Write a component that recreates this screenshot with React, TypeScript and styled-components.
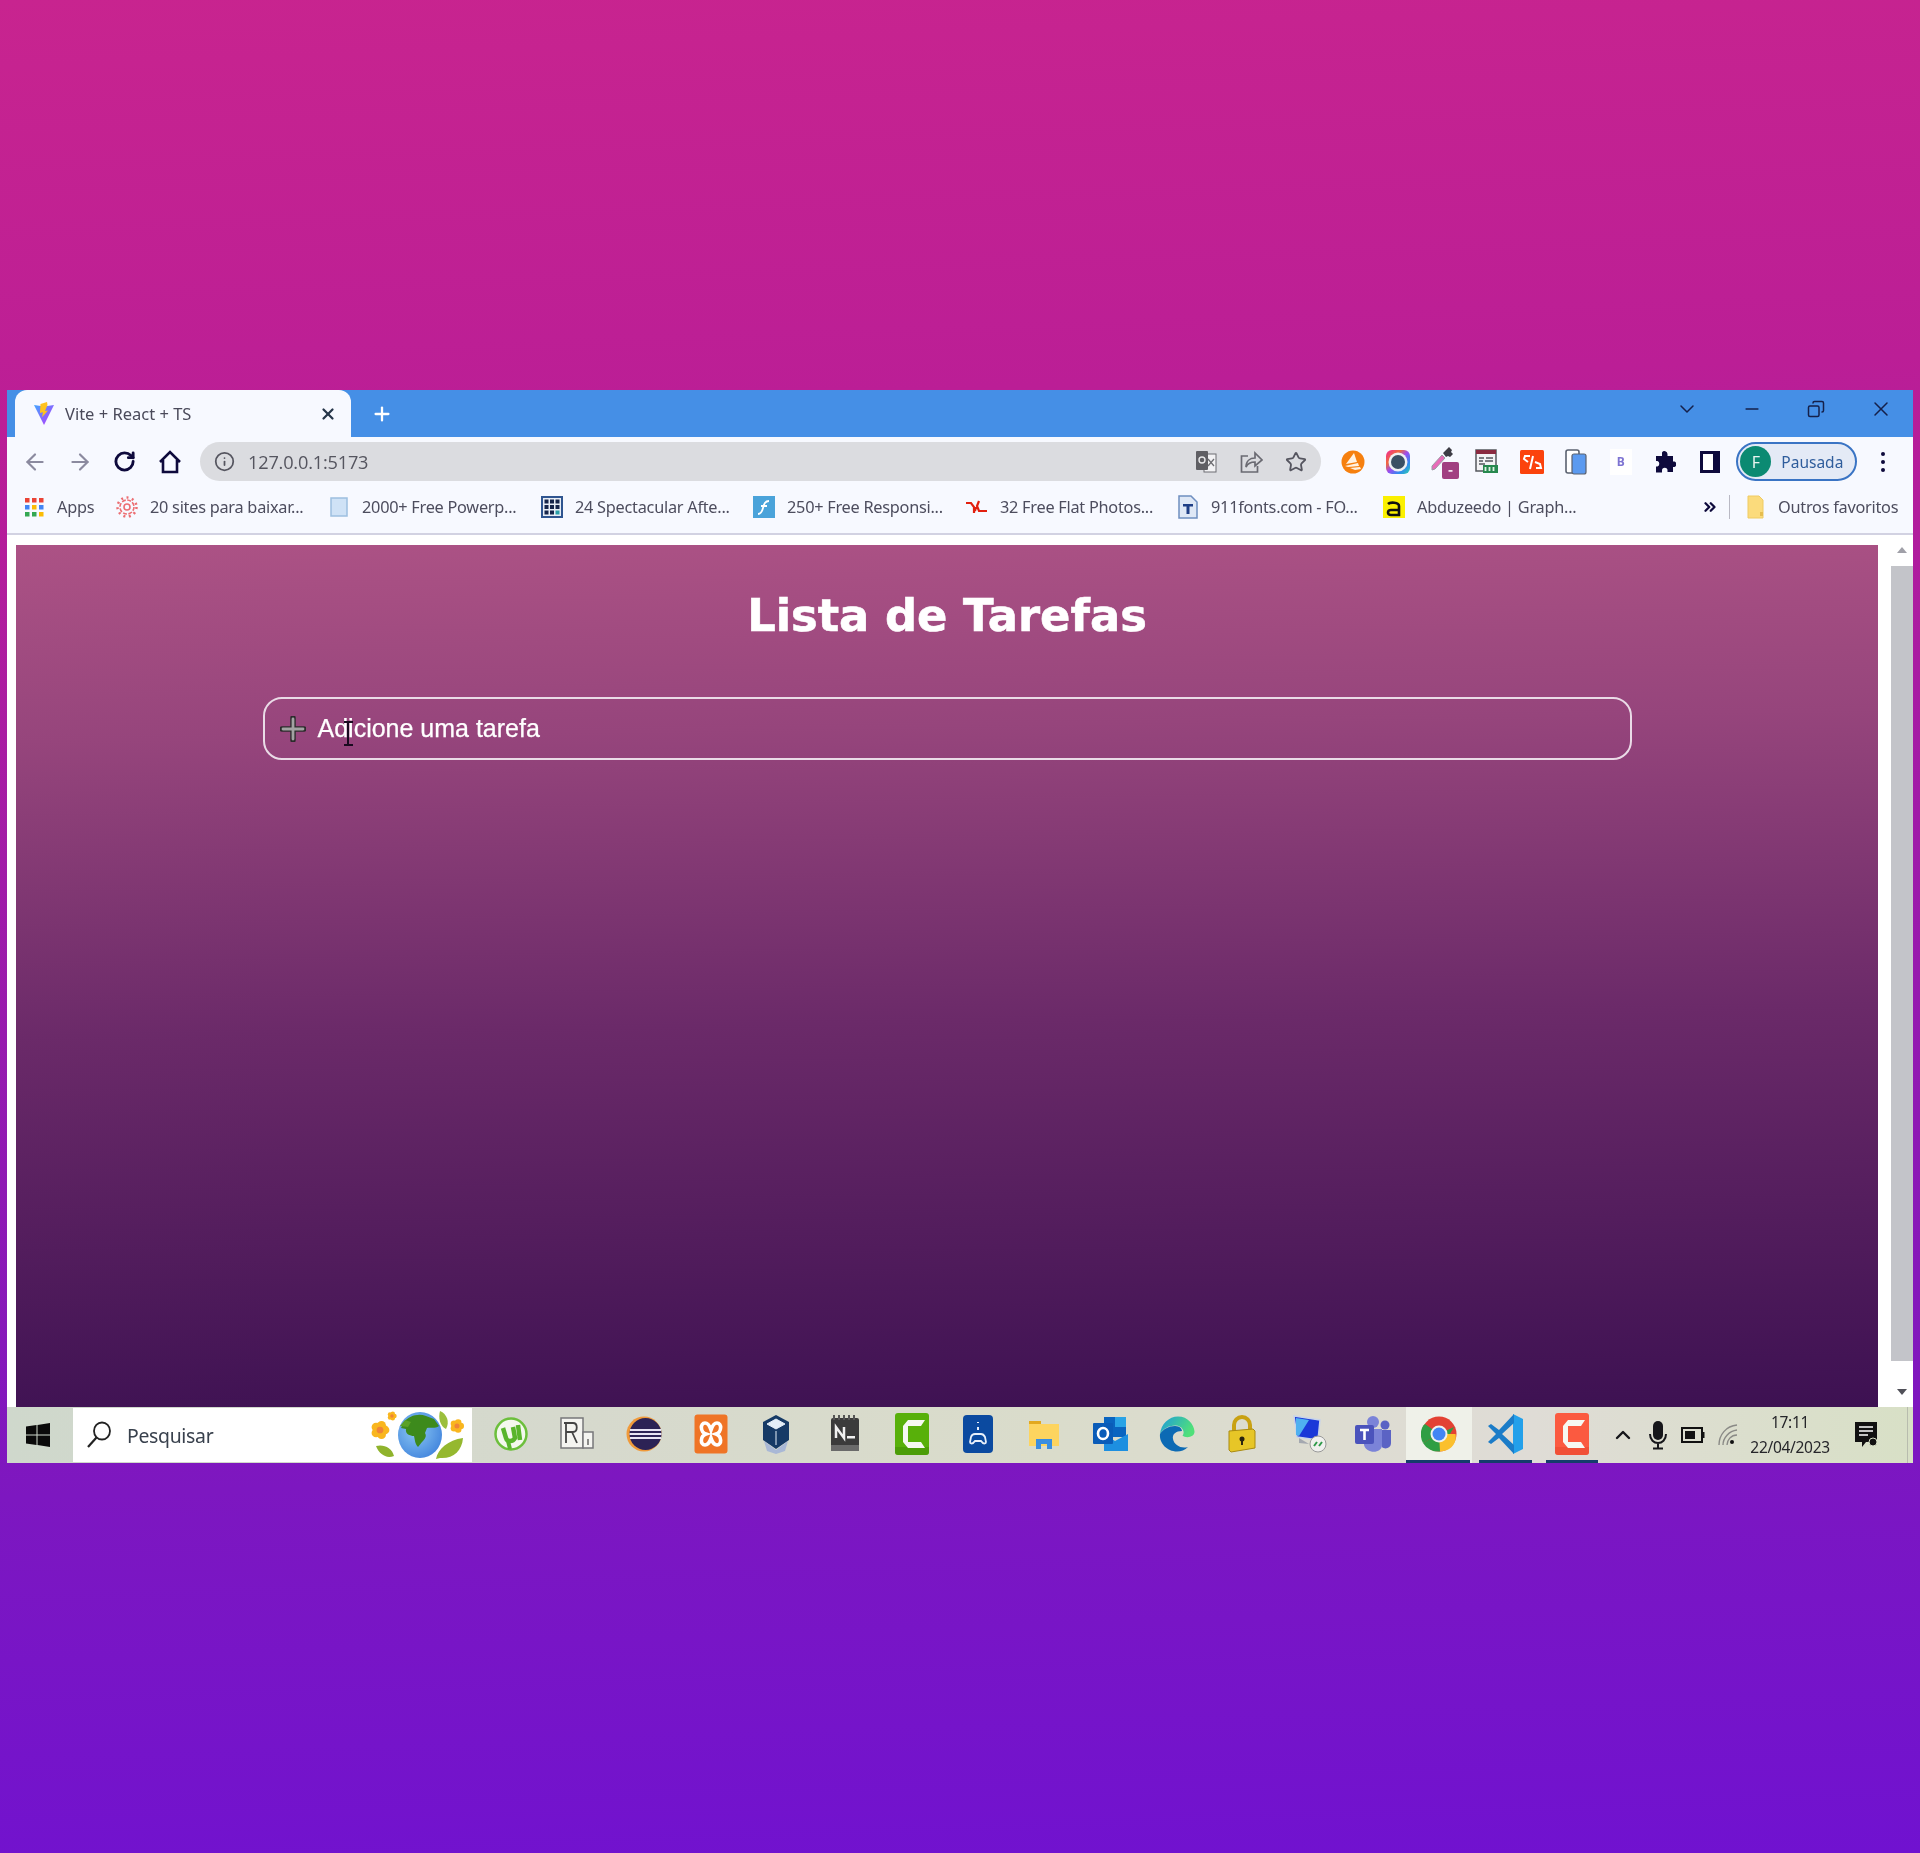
import React from 'react';
import styled, { createGlobalStyle } from 'styled-components';
import {
  ArrowLeft, ArrowRight, RotateCw, Info, Star, ChevronDown, Minus, Copy, X, Plus,
  ChevronsRight, ChevronUp,
} from 'lucide-react';

const UI_FONT = '"Noto Sans", "Open Sans", sans-serif';

const GlobalStyle = createGlobalStyle`
  html, body { margin: 0; padding: 0; }
  body { background: #7112d0; }
`;

const Page = styled.div`
  height: 1853px;
  padding: 390px 0 0 7px;
  box-sizing: border-box;
  background: linear-gradient(178deg, #c8248f 0%, #bb1e96 22%, #7d17c0 78%, #7012d0 100%);
`;

const Window = styled.div`
  width: 1906px;
  height: 1073px;
  display: flex;
  flex-direction: column;
  background: #f7f9ff;
  font-family: ${UI_FONT};
  filter: blur(0.4px);
`;

const TabStrip = styled.div`
  height: 47px;
  flex: none;
  display: flex;
  align-items: stretch;
  background: #458fe6;
  padding-left: 8px;
`;

const Tab = styled.div`
  width: 336px;
  display: flex;
  align-items: center;
  padding: 0 14px 0 18px;
  box-sizing: border-box;
  background: #f7f9ff;
  border-radius: 12px 12px 0 0;
  color: #4a4a5a;
  font-size: 16.5px;
`;

const TabTitle = styled.span`
  margin-left: 10px;
  margin-top: -1px;
  flex: 1;
  white-space: nowrap;
`;

const NewTab = styled.div`
  width: 62px;
  display: flex;
  align-items: center;
  justify-content: center;
  color: #fff;
`;

const WindowControls = styled.div`
  margin-left: auto;
  display: flex;
  align-items: flex-start;
  padding: 7px 0 0 0;
  color: #15204a;
`;

const WindowButton = styled.div`
  width: 64.5px;
  height: 24px;
  display: flex;
  align-items: center;
  justify-content: center;
`;

const Toolbar = styled.div`
  height: 49px;
  flex: none;
  display: flex;
  align-items: center;
  padding-left: 5px;
`;

const ToolButton = styled.div<{ $muted?: boolean }>`
  width: 45px;
  height: 39px;
  flex: none;
  display: flex;
  align-items: center;
  justify-content: center;
  color: ${(p) => (p.$muted ? '#8b8a9f' : '#0e0a3c')};
`;

const AddressBar = styled.div`
  width: 1121px;
  height: 39px;
  flex: none;
  margin: 0 10px 0 8px;
  padding: 0 3px 0 14px;
  box-sizing: border-box;
  display: flex;
  align-items: center;
  background: #dbdce0;
  border-radius: 20px;
  color: #55555f;
  font-size: 18.2px;
`;

const AddressText = styled.span`
  flex: 1;
  margin-left: 13px;
  letter-spacing: -0.2px;
  font-family: "Open Sans", sans-serif;
`;

const ExtButton = styled.div`
  width: 44.6px;
  height: 39px;
  flex: none;
  display: flex;
  align-items: center;
  justify-content: center;
`;

const ProfilePill = styled.div`
  width: 121px;
  height: 39px;
  flex: none;
  margin-left: 4px;
  box-sizing: border-box;
  display: flex;
  align-items: center;
  padding-left: 2px;
  border: 2px solid #3a74c4;
  border-radius: 20px;
  background: #e4eaf6;
  color: #2f5d9c;
  font-size: 15.5px;
`;

const Avatar = styled.div`
  width: 31px;
  height: 31px;
  margin-right: 10px;
  border-radius: 50%;
  background: #0b8a72;
  color: #e8f5f0;
  font-size: 16px;
  display: flex;
  align-items: center;
  justify-content: center;
`;

const MenuDots = styled.div`
  width: 4px;
  margin-left: 24px;
  display: flex;
  flex-direction: column;
  gap: 4px;
  span { width: 4px; height: 4px; border-radius: 50%; background: #0e0a3c; }
`;

const Bookmarks = styled.div`
  height: 47px;
  flex: none;
  display: flex;
  align-items: center;
  padding: 0 0 6px 16px;
  box-sizing: border-box;
  color: #4d4d5e;
  font-size: 16.3px;
  letter-spacing: -0.25px;
`;

const Bookmark = styled.div<{ $width: number }>`
  width: ${(p) => p.$width}px;
  flex: none;
  display: flex;
  align-items: center;
  gap: 12px;
  white-space: nowrap;
`;

const FavSlot = styled.div`
  width: 22px;
  height: 24px;
  flex: none;
  display: flex;
  align-items: center;
  justify-content: center;
`;

const OverflowMark = styled.div`
  width: 18px;
  height: 18px;
  margin-left: 2px;
  flex: none;
  display: flex;
`;

const BookmarkDivider = styled.div`
  width: 1px;
  height: 24px;
  margin: 0 14px 0 10px;
  flex: none;
  background: #b9b9c4;
`;

const Viewport = styled.div`
  flex: 1;
  min-height: 0;
  display: flex;
  background: #fff;
  border-top: 2px solid #d2d2e2;
`;

const Content = styled.main`
  width: 1862px;
  margin: 10px 0 0 9px;
  display: flex;
  flex-direction: column;
  align-items: center;
  background: linear-gradient(179deg, #ac5285 0%, #96457c 22%, #6b2a69 55%, #3d1152 100%);
`;

const Heading = styled.h1`
  margin: 43px 0 0;
  font-family: "DejaVu Sans", Verdana, sans-serif;
  font-size: 44.8px;
  line-height: 56px;
  font-weight: 700;
  color: #fff;
  -webkit-text-stroke: 0.6px #fff;
`;

const TaskInput = styled.div`
  position: relative;
  width: 1369px;
  height: 63px;
  margin-top: 53px;
  box-sizing: border-box;
  display: flex;
  align-items: center;
  padding: 0 0 1px 15px;
  border: 2px solid #eadbe7;
  border-radius: 19px;
  color: #fff;
  font-family: "Liberation Sans", Arial, sans-serif;
  font-size: 25px;
  -webkit-text-stroke: 0.25px #fff;
`;

const PlusMark = styled.div`
  width: 26px;
  height: 26px;
  margin: 2px 12px 0 0;
  flex: none;
`;

const TextCursor = styled.div`
  position: absolute;
  left: 79px;
  top: 22px;
  width: 9px;
  height: 25px;
  border-top: 2px solid #1a0a20;
  border-bottom: 2px solid #1a0a20;
  box-sizing: border-box;
  &::before {
    content: '';
    display: block;
    width: 2px;
    height: 21px;
    margin-left: 3.5px;
    background: #1a0a20;
  }
`;

const Scrollbar = styled.div`
  flex: 1;
  display: flex;
  flex-direction: column;
  justify-content: space-between;
  align-items: flex-end;
  padding: 8px 0 8px 0;
  background: #fff;
`;

const ScrollTrack = styled.div`
  width: 22px;
  margin: 9px 0 24px;
  flex: 1;
  background: #c3c4c9;
`;

const ScrollArrow = styled.div<{ $down?: boolean }>`
  width: 22px;
  height: 14px;
  display: flex;
  align-items: center;
  justify-content: center;
  &::before {
    content: '';
    border-left: 5px solid transparent;
    border-right: 5px solid transparent;
    ${(p) => (p.$down ? 'border-top: 6px solid #505058;' : 'border-bottom: 6px solid #a0a0a8;')}
  }
`;

const Taskbar = styled.div`
  height: 56px;
  flex: none;
  display: flex;
  align-items: stretch;
  background: linear-gradient(90deg, #cfd8cc 0%, #d6d9cd 30%, #dadccb 55%, #dfdcd6 80%, #d8e0c6 100%);
`;

const StartButton = styled.div`
  width: 66px;
  flex: none;
  padding-right: 4px;
  box-sizing: border-box;
  display: flex;
  align-items: center;
  justify-content: center;
`;

const SearchBox = styled.div`
  width: 399px;
  flex: none;
  margin: 1px 0 1px;
  display: flex;
  align-items: center;
  padding: 0 6px 0 13px;
  box-sizing: border-box;
  background: #fff;
  color: #39414d;
  font-size: 19.4px;
`;

const SearchLabel = styled.span`
  flex: 1;
  margin-left: 15px;
  letter-spacing: -0.3px;
`;

const TaskItems = styled.div`
  display: flex;
  margin-left: 6px;
`;

const TaskItem = styled.div<{ $active?: boolean; $open?: boolean; $nudge?: number }>`
  position: relative;
  width: 66.3px;
  display: flex;
  align-items: center;
  justify-content: center;
  padding: 0 0 3px ${(p) => p.$nudge ?? 0}px;
  box-sizing: border-box;
  background: ${(p) => (p.$active ? '#eff1e9' : 'transparent')};
  &::after {
    content: '';
    display: ${(p) => (p.$open ? 'block' : 'none')};
    position: absolute;
    left: ${(p) => (p.$active ? 0 : 7)}px;
    right: ${(p) => (p.$active ? 2 : 7)}px;
    bottom: 0;
    height: 3px;
    background: #163c6c;
  }
`;

const Tray = styled.div`
  margin-left: auto;
  display: flex;
  align-items: center;
  color: #16161a;
`;

const TrayIcon = styled.div`
  width: 35px;
  display: flex;
  align-items: center;
  justify-content: center;
`;

const Clock = styled.div`
  width: 90px;
  text-align: center;
  font-size: 15.5px;
  line-height: 25px;
  letter-spacing: -0.3px;
  color: #26262a;
`;

const NotifyButton = styled.div`
  width: 73px;
  align-self: stretch;
  box-sizing: border-box;
  padding-right: 8px;
  margin-right: 6px;
  display: flex;
  align-items: center;
  justify-content: center;
  border-right: 1px solid #b8bcae;
`;

/* ---- drawn icons ---- */

const ViteIcon = () => (
  <svg width="22" height="24" viewBox="0 0 22 24">
    <defs>
      <linearGradient id="vt" x1="0" y1="0" x2="1" y2="1">
        <stop offset="0" stopColor="#41a6ff" />
        <stop offset="1" stopColor="#bd34fe" />
      </linearGradient>
    </defs>
    <path d="M1 3l10 1.6L21 3 11 23z" fill="url(#vt)" />
    <path d="M14 0l-6.500 2-.6 9 3-.7-.8 5L15 8.500l-3 .6 2.500-6z" fill="#ffc31e" />
  </svg>
);

const AppsGrid = () => (
  <svg width="20" height="20" viewBox="0 0 20 20">
    {['#ea4335', '#ea4335', '#ea4335', '#4285f4', '#fbbc05', '#4285f4', '#34a853', '#34a853', '#fbbc05'].map((c, i) => (
      <rect key={i} x={1 + (i % 3) * 7} y={1 + Math.floor(i / 3) * 7} width="4.500" height="4.500" fill={c} />
    ))}
  </svg>
);

const GearFav = () => (
  <svg width="22" height="22" viewBox="0 0 22 22" fill="none" stroke="#ec6e72" strokeWidth="1.600">
    <circle cx="11" cy="11" r="3" />
    <circle cx="11" cy="11" r="7" strokeDasharray="4 1.500" />
    <circle cx="11" cy="11" r="9.500" strokeDasharray="2 3.500" strokeWidth="2.500" />
  </svg>
);

const PageFav = () => (
  <svg width="18" height="20" viewBox="0 0 18 20">
    <rect x="1" y="1" width="16" height="18" fill="#cfe2f6" stroke="#9dbfe0" strokeWidth="1.500" />
  </svg>
);

const TableFav = () => (
  <svg width="22" height="22" viewBox="0 0 22 22">
    <rect width="22" height="22" fill="#2f5590" />
    <rect x="2" y="2" width="18" height="18" fill="#e8eef6" />
    {[0, 1, 2, 3, 4, 5, 6, 7, 8].map((i) => (
      <rect key={i} x={3.500 + (i % 3) * 5.500} y={3.500 + Math.floor(i / 3) * 5.500} width="4" height="4" fill={i === 8 ? '#2a9fa8' : '#16254a'} />
    ))}
  </svg>
);

const FlashFav = () => (
  <svg width="22" height="22" viewBox="0 0 22 22">
    <rect width="22" height="22" fill="#4aa3da" />
    <path d="M5 18c3 0 4-2 5-6s2-7 6-7M8 10h6" fill="none" stroke="#fff" strokeWidth="1.800" />
  </svg>
);

const RedFav = () => (
  <svg width="22" height="16" viewBox="0 0 22 16" fill="none" stroke="#e2200f" strokeWidth="2.200">
    <path d="M0 4h5l3 4v6M13 2l-2 5 2 5 8 0M10 8l-1 4" />
  </svg>
);

const FontFav = () => (
  <svg width="20" height="24" viewBox="0 0 20 24">
    <path d="M1 1h12l6 6v16H1z" fill="#dfe8f6" stroke="#6f8fc0" strokeWidth="1.500" />
    <path d="M5 9h10v2.500h-3.500V19h-3v-7.500H5z" fill="#1f3f86" />
  </svg>
);

const AbduFav = () => (
  <svg width="22" height="22" viewBox="0 0 22 22" fill="none">
    <rect width="22" height="22" fill="#fbf000" />
    <path d="M5 8c2-2 11-2 11 2v9H8c-4 0-4-5 0-5h8" stroke="#111" strokeWidth="2.600" />
  </svg>
);

const FolderFav = () => (
  <svg width="17" height="24" viewBox="0 0 17 24">
    <path d="M1 1h11l4 4v18H1z" fill="#fbdb7c" stroke="#efcb63" />
    <rect x="13" y="17" width="3" height="4" fill="#e6bd4f" />
  </svg>
);

const TranslateIcon = () => (
  <svg width="22" height="24" viewBox="0 0 22 24">
    <rect x="9" y="4" width="12" height="18" fill="#f2f2f4" stroke="#6d6d72" />
    <rect x="1" y="1" width="12" height="19" rx="1" fill="#5f5f64" />
    <circle cx="7" cy="10" r="3" fill="none" stroke="#e8e8ea" strokeWidth="1.400" />
    <path d="M13 9l6 7M19 9l-6 7" stroke="#6d6d72" strokeWidth="1.300" />
  </svg>
);

const ShareIcon = () => (
  <svg width="24" height="24" viewBox="0 0 24 24" fill="none" stroke="#6a6a72" strokeWidth="1.700">
    <path d="M9 6H2.500v16h16v-6" />
    <path d="M7 17c0-6 4-9 9-9V3l7 7-7 6v-4c-4 0-7 1-9 5z" />
  </svg>
);

const HomeIcon = () => (
  <svg width="24" height="26" viewBox="0 0 24 26" fill="none" stroke="#0e0a3c" strokeWidth="2.600">
    <path d="M2 13L12 3l10 10M5 11v12h14V11" strokeLinejoin="miter" />
  </svg>
);

const AvastIcon = () => (
  <svg width="24" height="24" viewBox="0 0 24 24">
    <circle cx="12" cy="12" r="11.500" fill="#f6800f" />
    <path d="M13 3l3 9-11 2zM4 16l13-3 1 3-11 1zM9 18l10-1 1 2-6 1z" fill="#fff2e2" />
  </svg>
);

const LensIcon = () => (
  <svg width="24" height="24" viewBox="0 0 24 24">
    <defs>
      <linearGradient id="ln" x1="0" y1="0" x2="1" y2="1">
        <stop offset="0" stopColor="#f0259c" />
        <stop offset="0.300" stopColor="#f06a3c" />
        <stop offset="0.500" stopColor="#9a4df0" />
        <stop offset="0.750" stopColor="#2f8cf0" />
        <stop offset="1" stopColor="#2fd3a8" />
      </linearGradient>
    </defs>
    <rect width="24" height="24" rx="6" fill="url(#ln)" />
    <circle cx="12" cy="12" r="9.500" fill="#eef0f2" />
    <circle cx="12" cy="12" r="7" fill="#3a5064" />
  </svg>
);

const DropperIcon = () => (
  <svg width="40" height="36" viewBox="-6 0 40 36">
    <path d="M4 22L14 11l3 3L7 25l-3 1z" fill="#e86ab8" stroke="#9a9aa2" />
    <path d="M15 9l6-6 3 3-1 2 2 2-3 3-2-1-2 1z" fill="#3d3d45" />
    <rect x="14" y="18" width="17" height="17" rx="2" fill="#a13f81" />
    <rect x="20.500" y="26" width="4" height="1.800" fill="#f3e3ef" />
  </svg>
);

const HtmlExtIcon = () => (
  <svg width="24" height="26" viewBox="0 0 24 26">
    <rect x="1" y="1" width="20" height="21" fill="#f3f3f5" stroke="#55585e" strokeWidth="1.500" />
    <rect x="1" y="1" width="20" height="4" fill="#8a2a40" />
    <path d="M4 9h5M11 9h7M4 12h4M10 12h8M4 15h6" stroke="#55585e" strokeWidth="1.500" />
    <rect x="8" y="16" width="15" height="8" fill="#27894f" />
    <path d="M10.500 18v4M14.500 18v4M18.500 18v4" stroke="#dff0e4" strokeWidth="1.800" />
  </svg>
);

const SlashExtIcon = () => (
  <svg width="24" height="24" viewBox="0 0 24 24" fill="none" stroke="#fff" strokeWidth="2">
    <rect width="24" height="24" rx="1.500" fill="#fb430d" stroke="none" />
    <path d="M10 6H5l-1 3 4 3M13 6l-3 13M15 12l5 2 1 4h-5" />
  </svg>
);

const PhonesIcon = () => (
  <svg width="22" height="26" viewBox="0 0 22 26">
    <rect x="1" y="1" width="13" height="23" rx="2" fill="#fff" stroke="#5b6270" strokeWidth="1.600" />
    <rect x="7" y="5" width="14" height="20" rx="2" fill="#5b9af0" stroke="#5b6270" strokeWidth="1.200" />
  </svg>
);

const BootstrapExt = styled.div`
  width: 22px;
  height: 26px;
  background: #fff;
  color: #7e74d2;
  font-size: 12px;
  font-weight: 700;
  display: flex;
  align-items: center;
  justify-content: center;
`;

const PuzzleIcon = () => (
  <svg width="22" height="22" viewBox="0 0 22 22">
    <path fill="#0e0a3c" d="M8 1.500a3 3 0 0 1 5.500 1.500V5H19v5.500h1.500a3 3 0 0 1 0 5.500H19v5h-5.500v-1.500a2.700 2.700 0 0 0-5.500 0V21.500H2v-6h1.500a3 3 0 0 0 0-5.500H2V5h6z" />
  </svg>
);

const SidePanelIcon = () => (
  <svg width="20" height="22" viewBox="0 0 20 22">
    <rect x="1.500" y="1.500" width="17" height="19" fill="#fff" stroke="#0e0a3c" strokeWidth="3" />
    <rect x="13" y="1.500" width="5.500" height="19" fill="#0e0a3c" />
  </svg>
);

const WinLogo = () => (
  <svg width="24" height="24" viewBox="0 0 24 24" fill="#0a0a0a">
    <path d="M0 3.500l10.500-1.500v9.500H0zM11.500 2L24 0v11.500H11.500zM0 12.500h10.500V22L0 20.500zM11.500 12.500H24V24l-12.500-2z" />
  </svg>
);

const MagnifierIcon = () => (
  <svg width="26" height="28" viewBox="0 0 26 28" fill="none" stroke="#222" strokeWidth="1.800">
    <ellipse cx="16" cy="10" rx="8" ry="8.500" />
    <path d="M10.500 16.500L2 26" strokeWidth="2.200" />
  </svg>
);

const Flower = ({ cx, cy, r }: { cx: number; cy: number; r: number }) => (
  <g>
    {[0, 72, 144, 216, 288].map((a) => (
      <circle
        key={a}
        cx={cx + Math.cos((a * Math.PI) / 180) * r * 0.62}
        cy={cy + Math.sin((a * Math.PI) / 180) * r * 0.62}
        r={r * 0.55}
        fill="#f9b61f"
      />
    ))}
    <circle cx={cx} cy={cy} r={r * 0.42} fill="#ef8438" />
  </g>
);

const GlobeArt = () => (
  <svg width="96" height="50" viewBox="0 0 96 50">
    <defs>
      <radialGradient id="gl" cx="0.400" cy="0.400" r="0.700">
        <stop offset="0" stopColor="#8cc8f4" />
        <stop offset="1" stopColor="#3f82dc" />
      </radialGradient>
    </defs>
    <ellipse cx="50" cy="25" rx="22" ry="23" fill="url(#gl)" />
    <path d="M34 12c5-6 14-9 22-6l8 3 5 7c-4 3-9 1-12 2l-2 5c2 3 0 6-3 9l-4 5c-3-3-3-7-4-11-4 0-9-2-8-7l-5-1z" fill="#3d8a1c" />
    <path d="M30 16l5-6 6 2-3 5z" fill="#5aa127" />
    <Flower cx={10} cy={20} r={8} />
    <Flower cx={22} cy={6} r={4} />
    <Flower cx={87} cy={16} r={6} />
    <path d="M70 1c7 3 10 11 6 18-6-3-8-11-6-18z" fill="#9bbf3c" />
    <path d="M6 36c8-2 16 2 18 10-8 3-15-2-18-10z" fill="#8fb32c" />
    <path d="M66 49c2-10 12-19 27-21-1 13-10 21-23 20z" fill="#95b82f" />
  </svg>
);

const UTorrentIcon = () => (
  <svg width="34" height="36" viewBox="0 0 34 36">
    <circle cx="17" cy="18" r="15.500" fill="#f4f8ee" stroke="#6cbf3c" strokeWidth="2.500" />
    <path d="M9 12l3 10c1 4 7 4 9 0l-2-11M24 9l2 15" fill="none" stroke="#59b52c" strokeWidth="4.500" />
    <path d="M14 25l2 8" stroke="#59b52c" strokeWidth="4" />
  </svg>
);

const RStudioIcon = () => (
  <svg width="34" height="34" viewBox="0 0 34 34">
    <rect x="1" y="1" width="22" height="30" fill="#f4f4f0" stroke="#77777a" strokeWidth="1.500" />
    <rect x="23" y="15" width="10" height="16" fill="#f4f4f0" stroke="#77777a" strokeWidth="1.500" />
    <path d="M6 6v20M4 6h9c5 0 5 9 0 9H6M12 15l5 11" fill="none" stroke="#444" strokeWidth="1.800" />
    <path d="M28 22v6" stroke="#444" strokeWidth="1.200" />
  </svg>
);

const EclipseIcon = () => (
  <svg width="36" height="36" viewBox="0 0 36 36">
    <circle cx="18" cy="18" r="17.500" fill="#f09a3a" />
    <circle cx="19.500" cy="18" r="16" fill="#2c2255" />
    <path d="M4 14h31M3.500 18h32M4 22h31" stroke="#e8e4f4" strokeWidth="1.800" />
  </svg>
);

const XamppIcon = () => (
  <svg width="34" height="40" viewBox="0 0 34 40">
    <rect x="0.500" y="0.500" width="33" height="39" rx="3" fill="#ef7426" />
    <path d="M11 9c-5 0-5 9 1 11-6 2-6 11-1 11 4 0 5-4 6-7 1 3 2 7 6 7 5 0 5-9-1-11 6-2 6-11 1-11-4 0-5 4-6 7-1-3-2-7-6-7z" fill="none" stroke="#fff" strokeWidth="3.600" />
  </svg>
);

const VBoxIcon = () => (
  <svg width="30" height="40" viewBox="0 0 30 40">
    <path d="M15 1l13 7v18l-13 9-13-9V8z" fill="#163a66" />
    <path d="M15 5l9 5-9 5-9-5zM15 17v14" fill="#e4eef8" stroke="#e4eef8" strokeWidth="1" />
    <path d="M3 27l12 9 12-9-3 10-9 3-9-3z" fill="#a9b8d6" />
  </svg>
);

const NotionIcon = () => (
  <svg width="28" height="38" viewBox="0 0 28 38">
    <rect y="3" width="28" height="33" rx="2" fill="#3b3b3b" />
    <path d="M3 0v5M8 0v5M13 0v5M18 0v5M23 0v5" stroke="#555" strokeWidth="2" />
    <rect y="30" width="28" height="6" fill="#6a6a6a" />
    <path d="M5 23V12l8 11V12" fill="none" stroke="#f0f0f0" strokeWidth="2.500" />
    <rect x="16" y="21" width="8" height="2.500" fill="#f0f0f0" />
  </svg>
);

const CamtasiaIcon = ({ bg, bg2 }: { bg: string; bg2: string }) => (
  <svg width="34" height="42" viewBox="0 0 34 42">
    <rect width="34" height="42" rx="3" fill={bg} />
    <path d="M0 34h34v5a3 3 0 0 1-3 3H3a3 3 0 0 1-3-3z" fill={bg2} opacity="0.500" />
    <path d="M30 7H13l-5 6v16l5 6h17l-4-6H13V13h13z" fill="#f6f8f2" />
  </svg>
);

const PadIcon = () => (
  <svg width="30" height="38" viewBox="0 0 30 38" fill="none" stroke="#e8f0fa" strokeWidth="1.800">
    <rect width="30" height="38" rx="4" fill="#0b4aa0" stroke="none" />
    <path d="M8 22c1-3 3-3 4-3h6c2 0 3 1 4 3l1 5c0 2-3 2-4 0l-1-1h-6l-1 1c-1 2-4 2-4 0z" />
    <path d="M15 7v1M15 12v3" strokeWidth="2" />
  </svg>
);

const FolderIcon = () => (
  <svg width="32" height="32" viewBox="0 0 32 32">
    <path d="M1 3h12v4H1z" fill="#e2a81f" />
    <rect x="1" y="6" width="30" height="22" fill="#fdd45f" />
    <path d="M8 21h16v10h-5v-5h-6v5H8z" fill="#3a8ee0" />
  </svg>
);

const OutlookIcon = () => (
  <svg width="36" height="36" viewBox="0 0 36 36">
    <rect x="11" y="1" width="22" height="20" fill="#0a64c0" />
    <rect x="22" y="1" width="11" height="10" fill="#29a3e6" />
    <path d="M11 18l11 7 13-7v17H11z" fill="#1d8fe0" />
    <rect y="7" width="20" height="21" rx="1" fill="#0a5cb8" />
    <ellipse cx="10" cy="17.500" rx="5" ry="5.500" fill="none" stroke="#fff" strokeWidth="2.600" />
  </svg>
);

const EdgeIcon = () => (
  <svg width="36" height="36" viewBox="0 0 36 36">
    <defs>
      <linearGradient id="ed" x1="0" y1="0" x2="1" y2="0.400">
        <stop offset="0" stopColor="#1d9bdc" />
        <stop offset="1" stopColor="#50e07a" />
      </linearGradient>
    </defs>
    <path d="M1 18C2 8 10 .5 19 .5c10 0 16 8 16.500 15 .3 6-9 7-12 4 3-3 0-10-7-10S4 13 1 18z" fill="url(#ed)" />
    <path d="M1 18c3-5 9-8 15-8 5 0 7 3 7 5-6 0-10 3-9 8 1 6 8 10 15 8-3 3-7 4.500-11 4.500C8 35.500 0 27 1 18z" fill="#0c6ab4" />
  </svg>
);

const LockIcon = () => (
  <svg width="28" height="38" viewBox="0 0 28 38">
    <path d="M6 17V10a8 8 0 0 1 16 0v7" fill="none" stroke="#c9a112" strokeWidth="4" />
    <path d="M1 16l24-2 2 2v17l-24 4-2-2z" fill="#e7c627" stroke="#a98a10" />
    <circle cx="14" cy="24" r="2.500" fill="#2a2410" />
    <rect x="13" y="25" width="2" height="5" fill="#2a2410" />
  </svg>
);

const RemoteIcon = () => (
  <svg width="36" height="38" viewBox="0 0 36 38">
    <path d="M3 1l26 4-2 20-21-3z" fill="#1a38d8" stroke="#c8d4ea" strokeWidth="1.500" />
    <path d="M5 3l13 2-10 16-3-1z" fill="#4fb0f0" />
    <path d="M8 23l10 6-10-1z" fill="#a4a8b0" />
    <circle cx="27" cy="29" r="8" fill="#f0f0ee" stroke="#9a9a9a" />
    <path d="M23 31l3-4M28 31l3-4" stroke="#2f9a4a" strokeWidth="2" />
  </svg>
);

const TeamsIcon = () => (
  <svg width="36" height="38" viewBox="0 0 36 38">
    <circle cx="18" cy="7" r="6" fill="#7b83d8" />
    <circle cx="30" cy="10" r="4.500" fill="#5b63c4" />
    <path d="M24 15h12v13c0 5-6 7-9 4z" fill="#5b63c4" />
    <path d="M9 14h18v16c0 9-16 9-18 0z" fill="#7b83d8" />
    <rect y="10" width="19" height="19" rx="2" fill="#4b53bc" />
    <path d="M5 15h9M9.500 15v10" stroke="#fff" strokeWidth="2.600" />
  </svg>
);

const ChromeIcon = () => (
  <svg width="36" height="36" viewBox="0 0 36 36">
    <circle cx="18" cy="18" r="17.500" fill="#e34133" />
    <path d="M18 18L2 27c-4-8-2-16 2-19z" fill="#2f9e44" />
    <path d="M2 27a17.500 17.500 0 0 0 17 8.500L33 11l-15 7z" fill="#2f9e44" />
    <path d="M18 18h16.500c2 9-5 17.500-15.500 17.500z" fill="#fbc02d" />
    <circle cx="18" cy="18" r="8.500" fill="#f0f2ec" />
    <circle cx="18" cy="18" r="6.500" fill="#4285f4" />
  </svg>
);

const VSCodeIcon = () => (
  <svg width="36" height="42" viewBox="0 0 36 42">
    <path d="M25 1l10 5v30l-10 5z" fill="#23a0ea" />
    <path d="M26 1L11 17 3 11 0 13l8 8-8 8 3 2 8-6 15 16v-9L14 21 26 10z" fill="#1b7cc8" />
  </svg>
);

const MicIcon = () => (
  <svg width="20" height="30" viewBox="0 0 20 30" fill="none" stroke="#16161a" strokeWidth="2">
    <rect x="5" y="1" width="10" height="19" rx="5" fill="#16161a" stroke="none" />
    <path d="M2 14c0 12 16 12 16 0M10 23v5M5 28.500h10" />
  </svg>
);

const BatteryIcon = () => (
  <svg width="24" height="16" viewBox="0 0 24 16">
    <rect x="1" y="1" width="20" height="14" fill="none" stroke="#111" strokeWidth="2" />
    <rect x="4" y="4" width="10" height="8" fill="#111" />
    <rect x="21.500" y="5" width="2" height="6" fill="#111" />
  </svg>
);

const WifiIcon = () => (
  <svg width="22" height="22" viewBox="0 0 22 22" fill="none" stroke="#8a8a86" strokeWidth="1.400">
    <path d="M2 21C2 11 9 2 20 1M6 21c0-7 6-14 14-15M10 21c0-5 4-10 10-10" />
    <circle cx="15" cy="18" r="2" fill="#111" stroke="none" />
  </svg>
);

const NoteIcon = () => (
  <svg width="26" height="28" viewBox="0 0 26 28">
    <path d="M1 1h22v20H12l-4 5v-5H1z" fill="#111" />
    <path d="M5 6h14M5 10h14M5 14h9" stroke="#fff" strokeWidth="1.600" />
    <circle cx="19" cy="21" r="4" fill="#111" stroke="#d8e0c6" />
  </svg>
);

const BOOKMARKS: { icon: React.ReactNode; label: string; width: number }[] = [
  { icon: <AppsGrid />, label: 'Apps', width: 93 },
  { icon: <GearFav />, label: '20 sites para baixar...', width: 212 },
  { icon: <PageFav />, label: '2000+ Free Powerp...', width: 213 },
  { icon: <TableFav />, label: '24 Spectacular Afte...', width: 212 },
  { icon: <FlashFav />, label: '250+ Free Responsi...', width: 213 },
  { icon: <RedFav />, label: '32 Free Flat Photos...', width: 211 },
  { icon: <FontFav />, label: '911fonts.com - FO...', width: 206 },
  { icon: <AbduFav />, label: 'Abduzeedo | Graph...', width: 316 },
];

const TASK_ICONS: { key: string; node: React.ReactNode; nudge?: number; active?: boolean; open?: boolean }[] = [
  { key: 'utorrent', node: <UTorrentIcon /> },
  { key: 'rstudio', node: <RStudioIcon /> },
  { key: 'eclipse', node: <EclipseIcon /> },
  { key: 'xampp', node: <XamppIcon />, nudge: 2 },
  { key: 'vbox', node: <VBoxIcon /> },
  { key: 'notion', node: <NotionIcon />, nudge: 4 },
  { key: 'camtasia', node: <CamtasiaIcon bg="#58b00a" bg2="#3f8a06" />, nudge: 6 },
  { key: 'pad', node: <PadIcon />, nudge: 6 },
  { key: 'folder', node: <FolderIcon />, nudge: 5 },
  { key: 'outlook', node: <OutlookIcon />, nudge: 6 },
  { key: 'edge', node: <EdgeIcon />, nudge: 6 },
  { key: 'lock', node: <LockIcon />, nudge: 4 },
  { key: 'remote', node: <RemoteIcon />, nudge: 4 },
  { key: 'teams', node: <TeamsIcon /> },
  { key: 'chrome', node: <ChromeIcon />, active: true, open: true },
  { key: 'vscode', node: <VSCodeIcon />, open: true },
  { key: 'camrec', node: <CamtasiaIcon bg="#fb5a40" bg2="#e8452c" />, open: true },
];

const App = () => (
  <Page>
    <GlobalStyle />
    <Window>
      <TabStrip>
        <Tab>
          <ViteIcon />
          <TabTitle>Vite + React + TS</TabTitle>
          <X size={18} color="#26364a" strokeWidth={3} />
        </Tab>
        <NewTab><Plus size={22} strokeWidth={2.5} /></NewTab>
        <WindowControls>
          <WindowButton><ChevronDown size={24} strokeWidth={1.5} /></WindowButton>
          <WindowButton><Minus size={20} strokeWidth={2} /></WindowButton>
          <WindowButton><Copy size={18} strokeWidth={2} style={{ transform: 'scaleX(-1)' }} /></WindowButton>
          <WindowButton><X size={24} strokeWidth={1.5} /></WindowButton>
        </WindowControls>
      </TabStrip>

      <Toolbar>
        <ToolButton $muted><ArrowLeft size={26} strokeWidth={2} /></ToolButton>
        <ToolButton $muted><ArrowRight size={26} strokeWidth={2} /></ToolButton>
        <ToolButton><RotateCw size={23} strokeWidth={3} /></ToolButton>
        <ToolButton><HomeIcon /></ToolButton>
        <AddressBar>
          <Info size={21} color="#55555f" strokeWidth={2} />
          <AddressText>127.0.0.1:5173</AddressText>
          <ToolButton><TranslateIcon /></ToolButton>
          <ToolButton><ShareIcon /></ToolButton>
          <ToolButton><Star size={22} color="#55555f" strokeWidth={2} /></ToolButton>
        </AddressBar>
        <ExtButton><AvastIcon /></ExtButton>
        <ExtButton><LensIcon /></ExtButton>
        <ExtButton><DropperIcon /></ExtButton>
        <ExtButton><HtmlExtIcon /></ExtButton>
        <ExtButton><SlashExtIcon /></ExtButton>
        <ExtButton><PhonesIcon /></ExtButton>
        <ExtButton><BootstrapExt>B</BootstrapExt></ExtButton>
        <ExtButton><PuzzleIcon /></ExtButton>
        <ExtButton><SidePanelIcon /></ExtButton>
        <ProfilePill>
          <Avatar>F</Avatar>
          Pausada
        </ProfilePill>
        <MenuDots><span /><span /><span /></MenuDots>
      </Toolbar>

      <Bookmarks>
        {BOOKMARKS.map((b) => (
          <Bookmark key={b.label} $width={b.width}>
            <FavSlot>{b.icon}</FavSlot>
            {b.label}
          </Bookmark>
        ))}
        <OverflowMark><ChevronsRight size={18} color="#0e0a3c" strokeWidth={3} /></OverflowMark>
        <BookmarkDivider />
        <Bookmark $width={150}>
          <FavSlot><FolderFav /></FavSlot>
          Outros favoritos
        </Bookmark>
      </Bookmarks>

      <Viewport>
        <Content>
          <Heading>Lista de Tarefas</Heading>
          <TaskInput>
            <PlusMark>
              <svg width="26" height="26" viewBox="0 0 26 26">
                <path d="M13 2v22M2 13h22" stroke="#2c2c2c" strokeWidth="5.500" strokeLinecap="round" />
                <path d="M13 3v20M3 13h20" stroke="#a2a2a2" strokeWidth="2.800" strokeLinecap="round" />
              </svg>
            </PlusMark>
            <span>Adicione uma tarefa</span>
            <TextCursor />
          </TaskInput>
        </Content>
        <Scrollbar>
          <ScrollArrow />
          <ScrollTrack />
          <ScrollArrow $down />
        </Scrollbar>
      </Viewport>

      <Taskbar>
        <StartButton><WinLogo /></StartButton>
        <SearchBox>
          <MagnifierIcon />
          <SearchLabel>Pesquisar</SearchLabel>
          <GlobeArt />
        </SearchBox>
        <TaskItems>
          {TASK_ICONS.map((t) => (
            <TaskItem key={t.key} $active={t.active} $open={t.open} $nudge={t.nudge}>{t.node}</TaskItem>
          ))}
        </TaskItems>
        <Tray>
          <TrayIcon><ChevronUp size={24} strokeWidth={2.4} /></TrayIcon>
          <TrayIcon><MicIcon /></TrayIcon>
          <TrayIcon><BatteryIcon /></TrayIcon>
          <TrayIcon><WifiIcon /></TrayIcon>
          <Clock>17:11<br />22/04/2023</Clock>
          <NotifyButton><NoteIcon /></NotifyButton>
        </Tray>
      </Taskbar>
    </Window>
  </Page>
);

export default App;
